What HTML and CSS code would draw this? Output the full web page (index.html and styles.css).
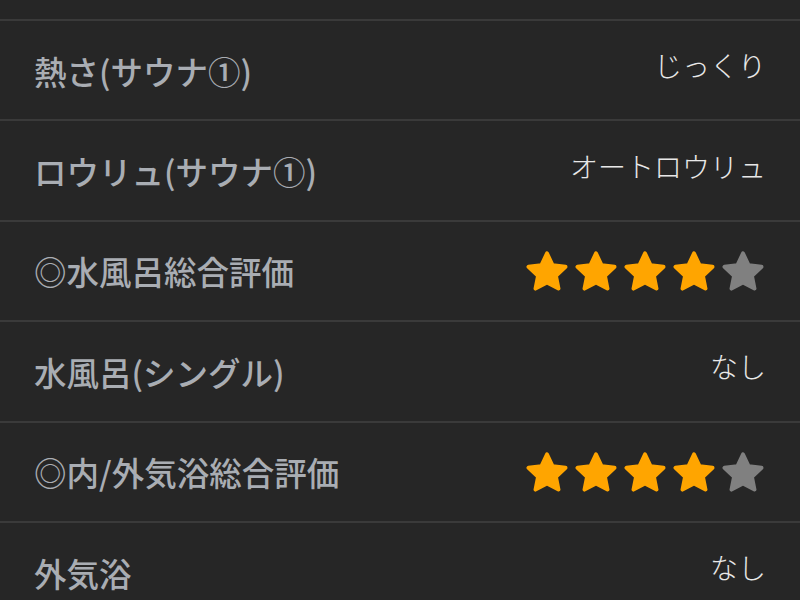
FILE: index.html
```html
<!DOCTYPE html>
<html lang="ja">
<head>
<meta charset="utf-8">
<link rel="stylesheet" href="styles.css">
</head>
<body>
<div class="list">
  <div class="row row-top"></div>
  <div class="row">
    <div class="label">熱さ(サウナ①)</div>
    <div class="value">じっくり</div>
  </div>
  <div class="row">
    <div class="label">ロウリュ(サウナ①)</div>
    <div class="value">オートロウリュ</div>
  </div>
  <div class="row">
    <div class="label">◎水風呂総合評価</div>
    <div class="stars">
      <svg class="star on" viewBox="1.3 1.0 21.4 20.5"><path d="M12 2.2l2.9 6.1 6.6.8-4.9 4.6 1.3 6.6L12 17.1l-5.9 3.2 1.3-6.6L2.5 9.1l6.6-.8z"/></svg>
      <svg class="star on" viewBox="1.3 1.0 21.4 20.5"><path d="M12 2.2l2.9 6.1 6.6.8-4.9 4.6 1.3 6.6L12 17.1l-5.9 3.2 1.3-6.6L2.5 9.1l6.6-.8z"/></svg>
      <svg class="star on" viewBox="1.3 1.0 21.4 20.5"><path d="M12 2.2l2.9 6.1 6.6.8-4.9 4.6 1.3 6.6L12 17.1l-5.9 3.2 1.3-6.6L2.5 9.1l6.6-.8z"/></svg>
      <svg class="star on" viewBox="1.3 1.0 21.4 20.5"><path d="M12 2.2l2.9 6.1 6.6.8-4.9 4.6 1.3 6.6L12 17.1l-5.9 3.2 1.3-6.6L2.5 9.1l6.6-.8z"/></svg>
      <svg class="star off" viewBox="1.3 1.0 21.4 20.5"><path d="M12 2.2l2.9 6.1 6.6.8-4.9 4.6 1.3 6.6L12 17.1l-5.9 3.2 1.3-6.6L2.5 9.1l6.6-.8z"/></svg>
    </div>
  </div>
  <div class="row">
    <div class="label">水風呂(シングル)</div>
    <div class="value">なし</div>
  </div>
  <div class="row">
    <div class="label">◎内/外気浴総合評価</div>
    <div class="stars">
      <svg class="star on" viewBox="1.3 1.0 21.4 20.5"><path d="M12 2.2l2.9 6.1 6.6.8-4.9 4.6 1.3 6.6L12 17.1l-5.9 3.2 1.3-6.6L2.5 9.1l6.6-.8z"/></svg>
      <svg class="star on" viewBox="1.3 1.0 21.4 20.5"><path d="M12 2.2l2.9 6.1 6.6.8-4.9 4.6 1.3 6.6L12 17.1l-5.9 3.2 1.3-6.6L2.5 9.1l6.6-.8z"/></svg>
      <svg class="star on" viewBox="1.3 1.0 21.4 20.5"><path d="M12 2.2l2.9 6.1 6.6.8-4.9 4.6 1.3 6.6L12 17.1l-5.9 3.2 1.3-6.6L2.5 9.1l6.6-.8z"/></svg>
      <svg class="star on" viewBox="1.3 1.0 21.4 20.5"><path d="M12 2.2l2.9 6.1 6.6.8-4.9 4.6 1.3 6.6L12 17.1l-5.9 3.2 1.3-6.6L2.5 9.1l6.6-.8z"/></svg>
      <svg class="star off" viewBox="1.3 1.0 21.4 20.5"><path d="M12 2.2l2.9 6.1 6.6.8-4.9 4.6 1.3 6.6L12 17.1l-5.9 3.2 1.3-6.6L2.5 9.1l6.6-.8z"/></svg>
    </div>
  </div>
  <div class="row">
    <div class="label">外気浴</div>
    <div class="value">なし</div>
  </div>
</div>
</body>
</html>
```

FILE: styles.css
```css
html, body {
  margin: 0;
  padding: 0;
  background: #262626;
  overflow: hidden;
}
body {
  font-family: "Noto Sans CJK JP", "Noto Sans", sans-serif;
}
.list {
  display: flex;
  flex-direction: column;
}
.row {
  height: 98.4px;
  flex: none;
  border-bottom: 2px solid #3a3a3a;
  display: flex;
  align-items: center;
  justify-content: space-between;
  padding: 0 34px 0 34px;
}
.row-top {
  height: 19px;
}
.label {
  font-size: 32.5px;
  font-weight: 500;
  color: #a9adb3;
}
.value {
  font-size: 28px;
  font-weight: 300;
  color: #e8e8e8;
  margin-bottom: 10px;
}
.stars {
  display: flex;
  gap: 7px;
  margin-right: 2px;
}
.star {
  width: 42px;
  height: 40px;
  display: block;
}
.star path {
  stroke-linejoin: round;
  stroke-width: 2;
}
.star.on path {
  fill: #ffa500;
  stroke: #ffa500;
}
.star.off path {
  fill: #808080;
  stroke: #808080;
}
```
